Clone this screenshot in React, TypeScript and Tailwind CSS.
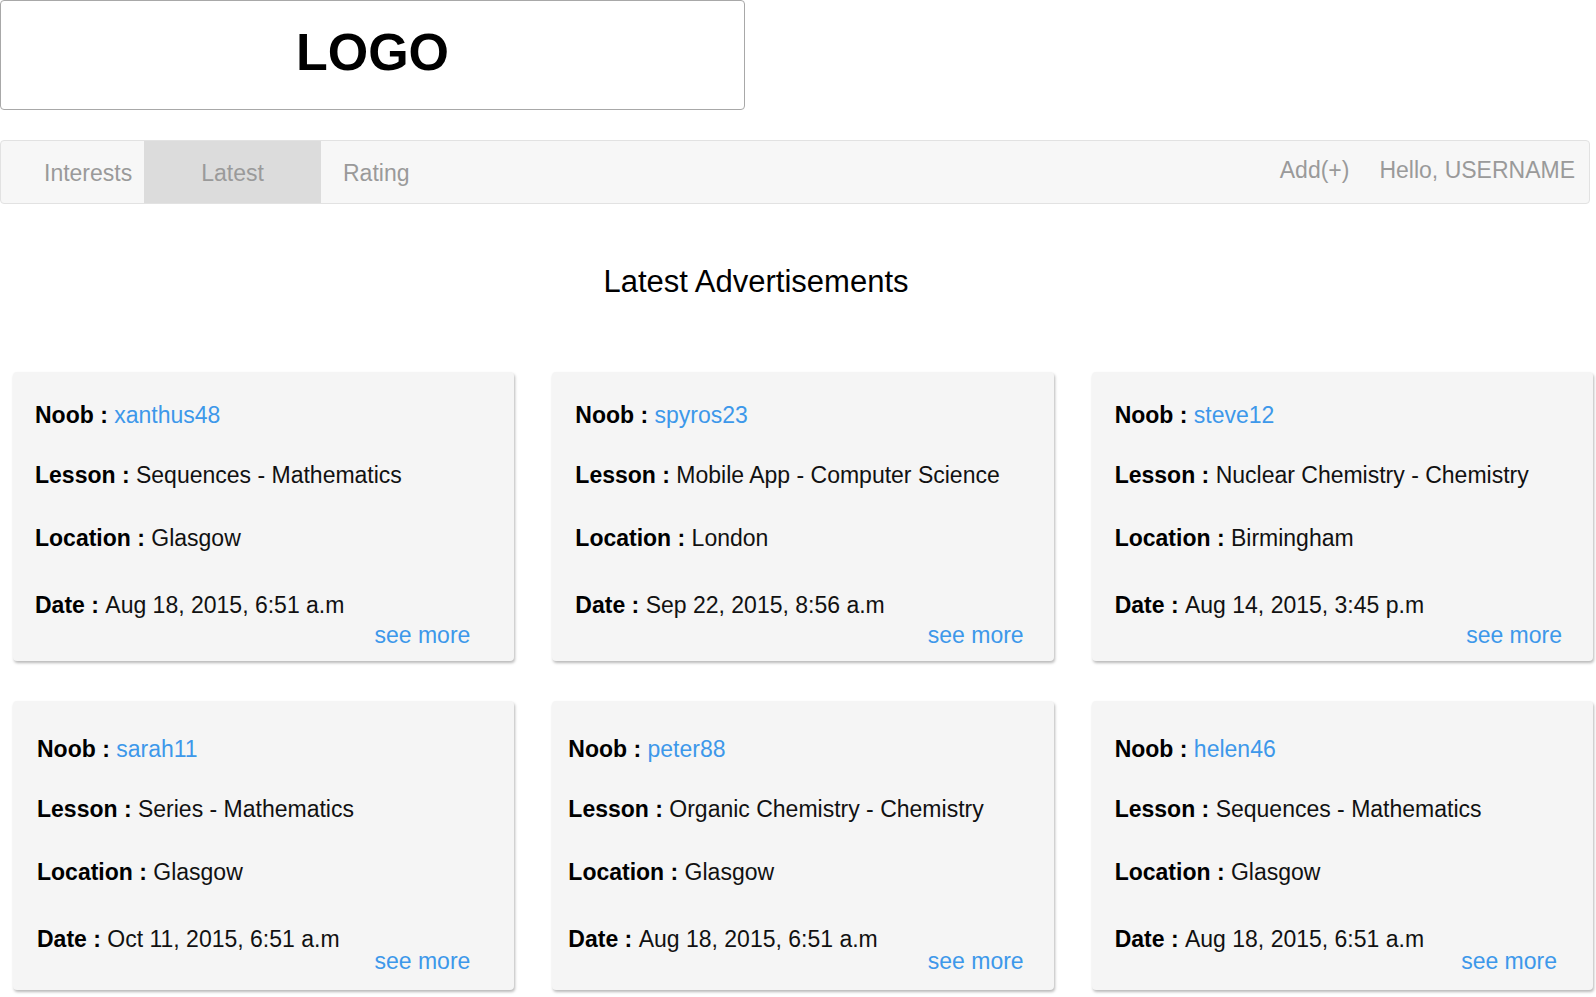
import React from "react";

type Ad = {
  noob: string;
  lesson: string;
  location: string;
  date: string;
  pl: string;
  pr: string;
};

const ROW_ONE: Ad[] = [
  {
    noob: "xanthus48",
    lesson: "Sequences - Mathematics",
    location: "Glasgow",
    date: "Aug 18, 2015, 6:51 a.m",
    pl: "pl-[22px]",
    pr: "pr-[44px]",
  },
  {
    noob: "spyros23",
    lesson: "Mobile App - Computer Science",
    location: "London",
    date: "Sep 22, 2015, 8:56 a.m",
    pl: "pl-[23px]",
    pr: "pr-[30px]",
  },
  {
    noob: "steve12",
    lesson: "Nuclear Chemistry - Chemistry",
    location: "Birmingham",
    date: "Aug 14, 2015, 3:45 p.m",
    pl: "pl-[23px]",
    pr: "pr-[31px]",
  },
];

const ROW_TWO: Ad[] = [
  {
    noob: "sarah11",
    lesson: "Series - Mathematics",
    location: "Glasgow",
    date: "Oct 11, 2015, 6:51 a.m",
    pl: "pl-[24px]",
    pr: "pr-[44px]",
  },
  {
    noob: "peter88",
    lesson: "Organic Chemistry - Chemistry",
    location: "Glasgow",
    date: "Aug 18, 2015, 6:51 a.m",
    pl: "pl-[16px]",
    pr: "pr-[30px]",
  },
  {
    noob: "helen46",
    lesson: "Sequences - Mathematics",
    location: "Glasgow",
    date: "Aug 18, 2015, 6:51 a.m",
    pl: "pl-[23px]",
    pr: "pr-[36px]",
  },
];

function AdCard({ ad, second }: { ad: Ad; second?: boolean }) {
  return (
    <div
      className={`h-[289px] rounded-[4px] bg-[#f5f5f5] shadow-[1px_2px_3px_rgba(0,0,0,0.28)] text-[23px] leading-[26px] text-[#111] ${ad.pl} ${
        second ? "pt-[35px]" : "pt-[30px]"
      }`}
    >
      <div className="h-[26px] whitespace-nowrap">
        <span className="font-bold text-black">Noob : </span>
        <span className="text-[#3d98ea]">{ad.noob}</span>
      </div>
      <div className="mt-[34px] h-[26px] whitespace-nowrap">
        <span className="font-bold text-black">Lesson : </span>
        {ad.lesson}
      </div>
      <div className="mt-[37px] h-[26px] whitespace-nowrap">
        <span className="font-bold text-black">Location : </span>
        {ad.location}
      </div>
      <div className="mt-[41px] h-[26px] whitespace-nowrap">
        <span className="font-bold text-black">Date : </span>
        {ad.date}
      </div>
      <div
        className={`h-[26px] text-right text-[23px] text-[#3d98ea] ${ad.pr} ${
          second ? "-mt-[4px]" : "mt-[4px]"
        }`}
      >
        see more
      </div>
    </div>
  );
}

export default function App() {
  return (
    <div className="min-h-screen w-full bg-white font-['Liberation_Sans',Arial,sans-serif] text-black">
      <header className="flex h-[110px] w-[745px] items-center justify-center rounded-[4px] border border-[#a8a8a8] pb-[6px]">
        <span className="text-[52px] font-bold leading-none">LOGO</span>
      </header>

      <nav className="mt-[30px] flex h-[64px] w-[1590px] items-stretch overflow-hidden rounded-[4px] border border-[#e2e2e2] bg-[#f7f7f7] text-[23px] text-[#9a9a9a]">
        <a className="flex w-[143px] items-center pl-[43px] pt-[2px]">Interests</a>
        <a className="flex w-[177px] items-center justify-center bg-[#dcdcdc] pt-[2px]">Latest</a>
        <a className="flex items-center pl-[22px] pt-[2px]">Rating</a>
        <div className="ml-auto flex items-center gap-[30px] pb-[3px] pr-[14px]">
          <a>Add(+)</a>
          <a>Hello, USERNAME</a>
        </div>
      </nav>

      <h1 className="mt-[60px] w-[1512px] text-center text-[31px] leading-[35px]">
        Latest Advertisements
      </h1>

      <main className="ml-[13px] mt-[73px] grid w-[1580px] grid-cols-3 gap-x-[38px] gap-y-[40px]">
        {ROW_ONE.map((ad) => (
          <AdCard key={ad.noob} ad={ad} />
        ))}
        {ROW_TWO.map((ad) => (
          <AdCard key={ad.noob} ad={ad} second />
        ))}
      </main>
    </div>
  );
}
